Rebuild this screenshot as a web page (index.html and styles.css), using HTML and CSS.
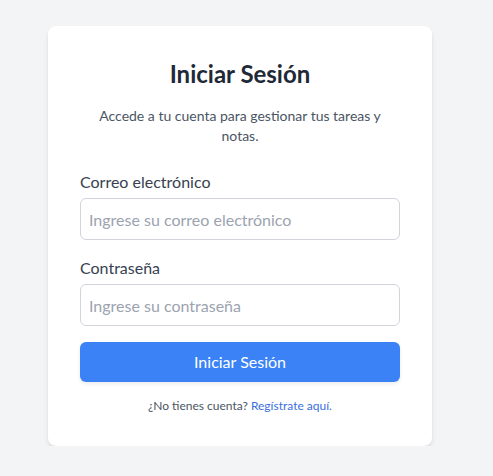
FILE: index.html
```html
<!DOCTYPE html>
<html lang="es">
<head>
<meta charset="utf-8">
<title>Iniciar Sesión</title>
<link rel="stylesheet" href="styles.css">
</head>
<body>
<div class="page">
  <div class="card">
    <h1 class="title">Iniciar Sesión</h1>
    <p class="subtitle">Accede a tu cuenta para gestionar tus tareas y notas.</p>
    <form class="form">
      <div class="field">
        <label class="label" for="email">Correo electrónico</label>
        <input class="input" id="email" type="email" placeholder="Ingrese su correo electrónico">
      </div>
      <div class="field">
        <label class="label" for="password">Contraseña</label>
        <input class="input" id="password" type="password" placeholder="Ingrese su contraseña">
      </div>
      <button class="button" type="button">Iniciar Sesión</button>
    </form>
    <p class="footer">¿No tienes cuenta? <a class="link" href="#">Regístrate aquí.</a></p>
  </div>
</div>
</body>
</html>
```
FILE: styles.css
```css
* { box-sizing: border-box; }
html, body { margin: 0; padding: 0; }
body {
  background: #f3f4f6;
  font-family: "Lato", "Liberation Sans", sans-serif;
  color: #374151;
}
.page {
  width: 480px;
  display: flex;
  justify-content: center;
  padding-top: 26px;
}
.card {
  width: 384px;
  background: #ffffff;
  border-radius: 8px;
  padding: 32px;
  box-shadow: 0 4px 6px -1px rgba(0,0,0,0.1), 0 2px 4px -2px rgba(0,0,0,0.1);
}
.title {
  margin: 0 0 16px;
  font-size: 24px;
  line-height: 32px;
  font-weight: 700;
  color: #1f2937;
  text-align: center;
}
.subtitle {
  margin: 0 0 24px;
  font-size: 14px;
  line-height: 20px;
  color: #4b5563;
  text-align: center;
}
.form { display: flex; flex-direction: column; }
.field { display: flex; flex-direction: column; margin-bottom: 16px; }
.label {
  font-size: 16px;
  line-height: 24px;
  color: #374151;
  margin-bottom: 4px;
}
.input {
  height: 42px;
  width: 100%;
  border: 1px solid #d1d5db;
  border-radius: 6px;
  padding: 8px;
  font-family: inherit;
  font-size: 16px;
  line-height: 24px;
  color: #374151;
  background: #fff;
  outline: none;
}
.input::placeholder { color: #9ca3af; }
.button {
  height: 40px;
  width: 100%;
  border: none;
  border-radius: 6px;
  background: #3b82f6;
  color: #ffffff;
  font-family: inherit;
  font-size: 16px;
  line-height: 24px;
  padding: 8px 16px;
  box-shadow: 0 2px 4px rgba(0,0,0,0.08);
  cursor: pointer;
}
.footer {
  margin: 16px 0 0;
  font-size: 12px;
  line-height: 16px;
  color: #4b5563;
  text-align: center;
}
.link { color: #3b6fe0; text-decoration: none; }
```
